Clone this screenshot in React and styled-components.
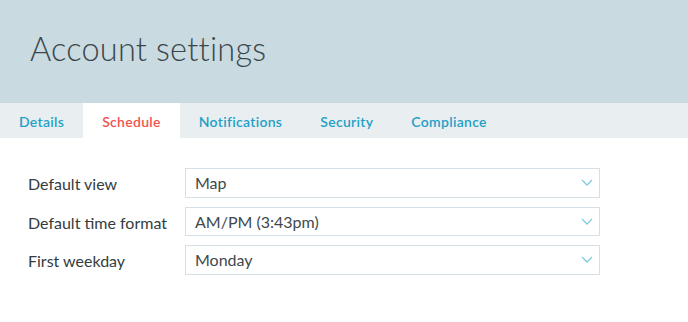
import styled, { createGlobalStyle } from "styled-components";

const Global = createGlobalStyle`
  html, body {
    margin: 0;
    padding: 0;
    background: #ffffff;
    font-family: Lato, "Open Sans", sans-serif;
  }
`;

const Page = styled.div`
  width: 688px;
  height: 322px;
  background: #fff;
`;

const Header = styled.header`
  height: 103px;
  background: #c9dae1;
  display: flex;
  align-items: center;
  padding: 0 30px;
  box-sizing: border-box;
`;

const Title = styled.h1`
  margin: 0;
  font-size: 32.5px;
  font-weight: 300;
  color: #3a464b;
  letter-spacing: 0.2px;
  padding-bottom: 6px;
`;

const TabBar = styled.nav`
  display: flex;
  height: 35px;
  background: #e9eef1;
`;

const Tab = styled.div`
  display: flex;
  align-items: center;
  padding: 2px 19px 0;
  font-size: 14px;
  font-weight: 600;
  letter-spacing: 0.3px;
  color: ${(p) => (p.$active ? "#f1534f" : "#1fa0c6")};
  background: ${(p) => (p.$active ? "#ffffff" : "transparent")};
`;

const Form = styled.div`
  display: flex;
  flex-direction: column;
  gap: 9px;
  padding: 30px 0 0 28px;
`;

const Row = styled.div`
  display: flex;
  align-items: center;
`;

const Label = styled.div`
  width: 157px;
  font-size: 16px;
  color: #333c40;
  padding-top: 2px;
`;

const Select = styled.div`
  width: 415px;
  height: 29.5px;
  box-sizing: border-box;
  border: 1px solid #d5e1e6;
  display: flex;
  align-items: center;
  justify-content: space-between;
  padding: 0 6px 0 9px;
  font-size: 16px;
  color: #40494d;
`;

const Chevron = () => (
  <svg width="12" height="7" viewBox="0 0 12 7" fill="none">
    <path d="M1 1l5 5 5-5" stroke="#7ccbe4" strokeWidth="1.3" />
  </svg>
);

const fields = [
  ["Default view", "Map"],
  ["Default time format", "AM/PM (3:43pm)"],
  ["First weekday", "Monday"],
];

const tabs = ["Details", "Schedule", "Notifications", "Security", "Compliance"];

export default function App() {
  return (
    <Page>
      <Global />
      <Header>
        <Title>Account settings</Title>
      </Header>
      <TabBar>
        {tabs.map((t) => (
          <Tab key={t} $active={t === "Schedule"}>
            {t}
          </Tab>
        ))}
      </TabBar>
      <Form>
        {fields.map(([l, v]) => (
          <Row key={l}>
            <Label>{l}</Label>
            <Select>
              <span>{v}</span>
              <Chevron />
            </Select>
          </Row>
        ))}
      </Form>
    </Page>
  );
}
